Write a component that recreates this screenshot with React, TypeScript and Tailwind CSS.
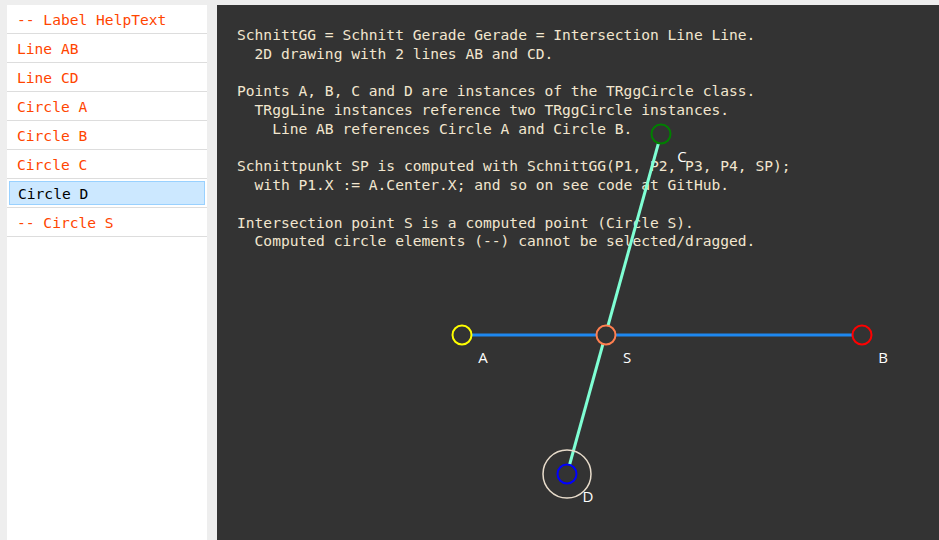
import React from 'react';

const items = [
  { id: 'helptext', label: '-- Label HelpText' },
  { id: 'ab', label: 'Line AB' },
  { id: 'cd', label: 'Line CD' },
  { id: 'a', label: 'Circle A' },
  { id: 'b', label: 'Circle B' },
  { id: 'c', label: 'Circle C' },
  { id: 'd', label: 'Circle D', selected: true },
  { id: 's', label: '-- Circle S' },
];

const helpText = [
  'SchnittGG = Schnitt Gerade Gerade = Intersection Line Line.',
  '  2D drawing with 2 lines AB and CD.',
  '',
  'Points A, B, C and D are instances of the TRggCircle class.',
  '  TRggLine instances reference two TRggCircle instances.',
  '    Line AB references Circle A and Circle B.',
  '',
  'Schnittpunkt SP is computed with SchnittGG(P1, P2, P3, P4, SP);',
  '  with P1.X := A.Center.X; and so on see code at GitHub.',
  '',
  'Intersection point S is a computed point (Circle S).',
  '  Computed circle elements (--) cannot be selected/dragged.',
].join('\n');

const mono = { fontFamily: '"DejaVu Sans Mono", "Liberation Mono", monospace' };

// circle centers, relative to the canvas panel
const pts = {
  A: { x: 245, y: 330, color: '#ffff00' },
  B: { x: 645, y: 330, color: '#ff0000' },
  C: { x: 444, y: 129, color: '#008000' },
  D: { x: 350, y: 469, color: '#0000ff' },
  S: { x: 389, y: 330, color: '#ff7f50' },
};

export default function App() {
  return (
    <div className="flex h-[540px] w-[939px] gap-[10px] overflow-hidden bg-[#eeeeee] pl-[7px] pt-[5px]">
      <div className="w-[200px] shrink-0 bg-white">
        {items.map((item) => (
          <div key={item.id} className="h-[29px] border-b border-[#dddddd]">
            {item.selected ? (
              <div className="px-[2px] pt-[2px]">
                <div
                  className="flex h-[24px] items-center border border-[#99d1ff] bg-[#cce8ff] pl-[8px] pt-[1px] text-[14.6px] text-black"
                  style={mono}
                >
                  {item.label}
                </div>
              </div>
            ) : (
              <div className="flex h-[28px] items-center pl-[10px] pt-[1px] text-[14.6px] text-[#ff4500]" style={mono}>
                {item.label}
              </div>
            )}
          </div>
        ))}
      </div>

      <div className="relative flex-1 bg-[#333333]">
        <pre
          className="whitespace-pre pl-[20px] pt-[21px] text-[14.6px] leading-[18.75px] text-[#f2e6cf]"
          style={mono}
        >
          {helpText}
        </pre>

        <svg className="absolute inset-0" width="722" height="535">
          <line x1={pts.A.x} y1={pts.A.y} x2={pts.B.x} y2={pts.B.y} stroke="#1e88f0" strokeWidth="3" />
          <line x1={pts.C.x} y1={pts.C.y} x2={pts.D.x} y2={pts.D.y} stroke="#7fffd4" strokeWidth="3" />
          <circle cx={pts.D.x} cy={pts.D.y} r="24" fill="none" stroke="#e8dccb" strokeWidth="1.5" />
          {Object.entries(pts).map(([name, p]) => (
            <g key={name}>
              <circle cx={p.x} cy={p.y} r="9.5" fill="#333333" stroke={p.color} strokeWidth="2" />
              <text
                x={p.x + 21}
                y={p.y + 22}
                fill="#ffffff"
                fontSize="15"
                textAnchor="middle"
                dominantBaseline="central"
                fontFamily='"Open Sans", "Noto Sans", sans-serif'
              >
                {name}
              </text>
            </g>
          ))}
        </svg>
      </div>
    </div>
  );
}
